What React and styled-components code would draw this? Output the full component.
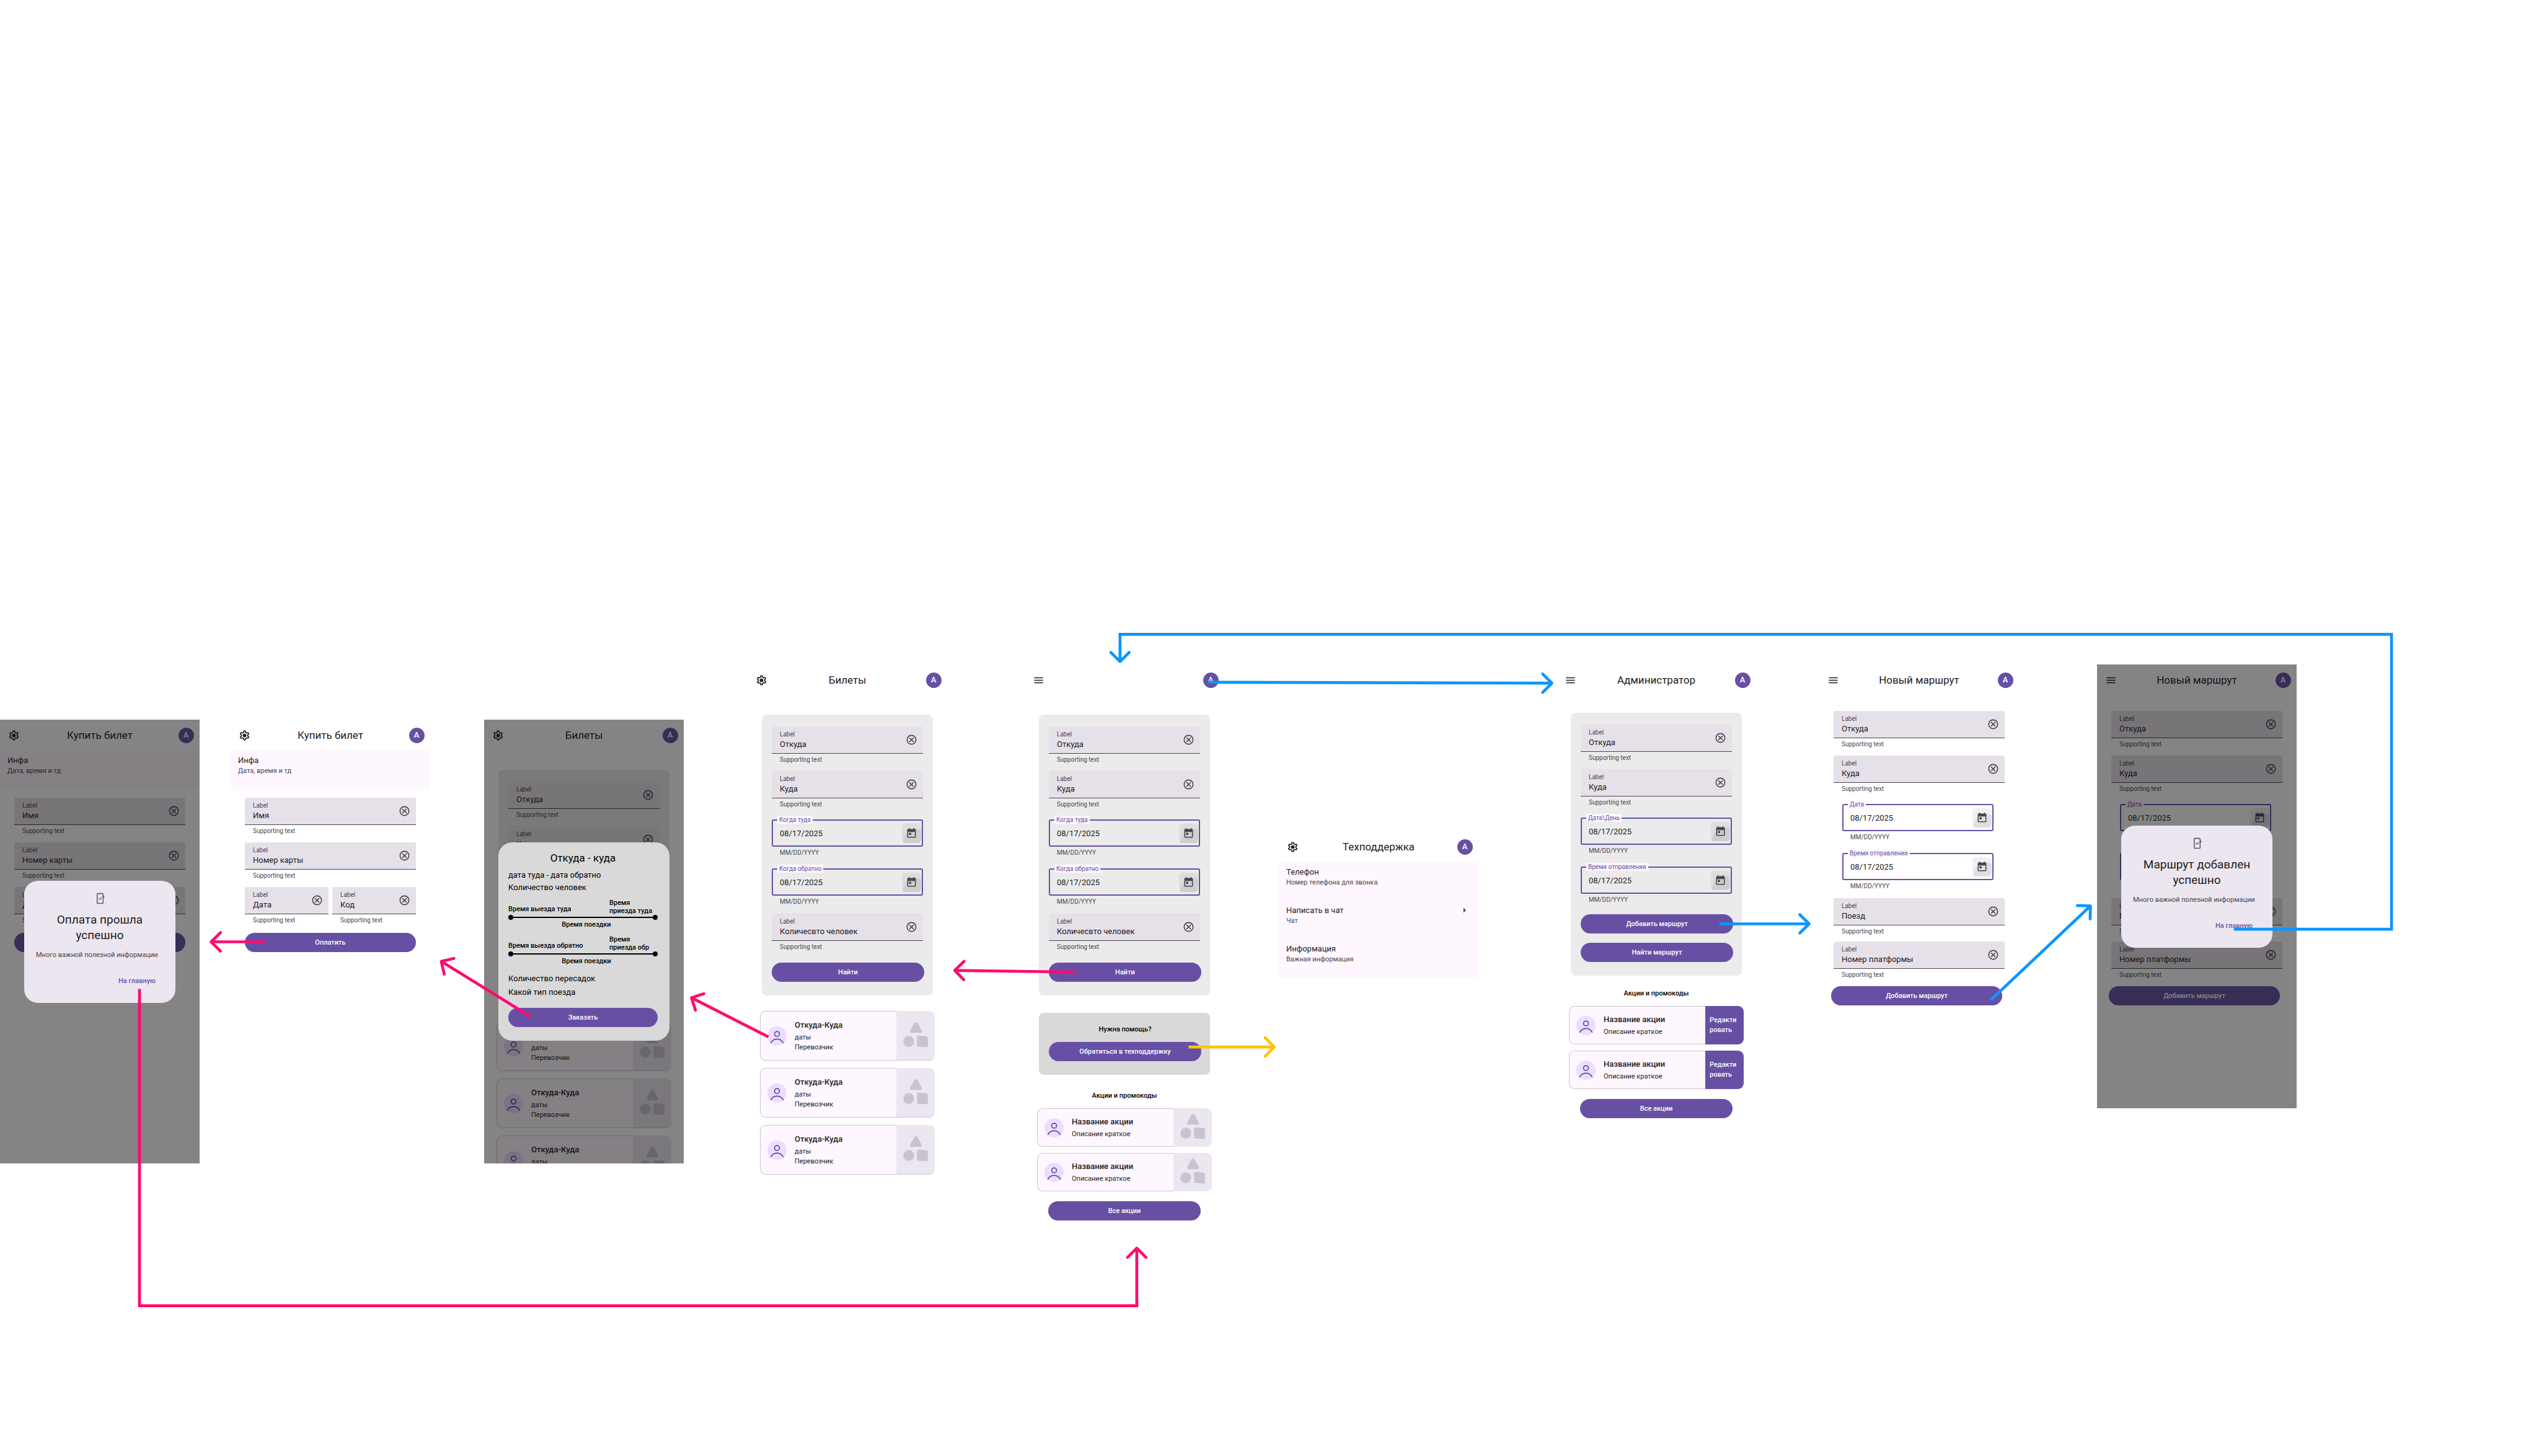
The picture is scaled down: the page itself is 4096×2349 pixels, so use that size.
import React, { useId } from "react";
import styled, { createGlobalStyle, css } from "styled-components";
import { MdOutlineCancel } from "react-icons/md";

const c = {
  primary: "#6750a4",
  onPrimary: "#ffffff",
  text: "#1d1b20",
  muted: "#49454f",
  surface: "#fef7ff",
  field: "#e6e0e9",
  high: "#ece6f0",
  outline: "#cac4d0",
  panel: "#ebebeb",
  panelDark: "#d9d9d9",
  pink: "#ff0b6d",
  blue: "#0c96ff",
  yellow: "#ffc30b",
};

const GlobalStyle = createGlobalStyle`
  *, *::before, *::after { box-sizing: border-box; }
  body {
    margin: 0;
    background: #ffffff;
    color: ${c.text};
    font-family: Roboto, "Noto Sans", sans-serif;
    font-size: 11px;
    line-height: 16px;
  }
  button, input { font: inherit; color: inherit; margin: 0; padding: 0; border: 0; background: none; }
  button { cursor: pointer; }
  h2, h3, p { margin: 0; font-weight: 400; }
`;

/* ---------- canvas ---------- */

const Board = styled.main`
  position: relative;
  width: 100%;
  min-height: 100vh;
  overflow: hidden;
`;

const Screen = styled.section`
  position: absolute;
  left: ${(p) => p.$x}px;
  top: ${(p) => p.$y}px;
  width: 322px;
  background: #ffffff;
  ${(p) => p.$framed && css`height: 716px; overflow: hidden;`}
`;

const Connectors = styled.svg`
  position: absolute;
  top: 0;
  left: 0;
  width: 100%;
  height: auto;
  pointer-events: none;
`;

/* ---------- building blocks ---------- */

const Bar = styled.header`
  display: flex;
  align-items: center;
  height: 50px;
  padding: 0 3px;
`;

const Slot = styled.button`
  display: flex;
  align-items: center;
  justify-content: center;
  flex: none;
  width: 38px;
  height: 38px;
`;

const BarTitle = styled.h2`
  flex: 1;
  text-align: center;
  font-size: 17px;
  line-height: 22px;
`;

const Initial = styled.span`
  display: flex;
  align-items: center;
  justify-content: center;
  width: 25px;
  height: 25px;
  border-radius: 50%;
  background: ${c.primary};
  color: ${c.onPrimary};
  font-size: 13px;
  font-weight: 500;
`;

const Section = styled.div`
  padding: ${(p) => p.$pad};
`;

const Stack = styled.div`
  display: flex;
  flex-direction: column;
  gap: ${(p) => p.$gap}px;
`;

const Pair = styled.div`
  display: grid;
  grid-template-columns: 1fr 1fr;
  gap: 6px;
`;

const Panel = styled.form`
  padding: 19px 14px 22px 16px;
  border-radius: 8px;
  background: ${c.panel};
`;

const HelpPanel = styled.div`
  display: flex;
  flex-direction: column;
  gap: 12px;
  padding: 19px 14px 22px 16px;
  border-radius: 8px;
  background: ${c.panelDark};
`;

const Caption = styled.h3`
  text-align: center;
  font-size: 11px;
  line-height: 16px;
  font-weight: 500;
  color: #000000;
`;

const Pill = styled.button`
  display: block;
  width: 100%;
  height: 31px;
  border-radius: 16px;
  background: ${c.primary};
  color: ${c.onPrimary};
  font-size: 11px;
  font-weight: 500;
`;

/* ---------- form fields ---------- */

const FieldBlock = styled.div`
  display: flex;
  flex-direction: column;
  min-width: 0;
`;

const Filled = styled.div`
  display: flex;
  align-items: center;
  height: 44px;
  padding-left: 13px;
  border-bottom: 1px solid ${c.muted};
  border-radius: 3px 3px 0 0;
  background: ${c.field};
`;

const FilledText = styled.div`
  display: flex;
  flex-direction: column;
  flex: 1;
  min-width: 0;
`;

const FieldLabel = styled.label`
  font-size: 10px;
  line-height: 13px;
  color: ${c.muted};
`;

const FieldInput = styled.input`
  width: 100%;
  min-width: 0;
  height: 19px;
  font-size: 13px;
  line-height: 19px;
  color: ${c.text};
  outline: none;
`;

const Support = styled.p`
  margin-top: 3px;
  padding-left: 13px;
  font-size: 10px;
  line-height: 13px;
  color: ${c.muted};
`;

const ClearSlot = styled(Slot)`
  color: ${c.muted};
`;

const DateBlock = styled(FieldBlock)`
  padding: 6px 0 1px;
`;

const Outlined = styled.div`
  position: relative;
  display: flex;
  align-items: center;
  height: 44px;
  padding: 0 1px 0 11px;
  border: 2px solid ${c.primary};
  border-radius: 3px;
`;

const NotchLabel = styled.label`
  position: absolute;
  top: -8px;
  left: 7px;
  padding: 0 3px;
  background: ${c.surface};
  color: ${c.primary};
  font-size: 10px;
  line-height: 13px;
`;

const DateButton = styled.button`
  position: relative;
  display: flex;
  flex: none;
  width: 31px;
  height: 31px;
`;

function TextField({ value }) {
  const id = useId();
  return (
    <FieldBlock>
      <Filled>
        <FilledText>
          <FieldLabel htmlFor={id}>Label</FieldLabel>
          <FieldInput id={id} type="text" defaultValue={value} />
        </FilledText>
        <ClearSlot type="button" aria-label="Очистить">
          <MdOutlineCancel size={19} />
        </ClearSlot>
      </Filled>
      <Support>Supporting text</Support>
    </FieldBlock>
  );
}

function DateField({ label }) {
  const id = useId();
  return (
    <DateBlock>
      <Outlined>
        <NotchLabel htmlFor={id}>{label}</NotchLabel>
        <FieldInput id={id} type="text" defaultValue="08/17/2025" />
        <DateButton type="button" aria-label="Календарь">
          <CalendarIcon />
        </DateButton>
      </Outlined>
      <Support>MM/DD/YYYY</Support>
    </DateBlock>
  );
}

/* ---------- icons ---------- */

const CalendarIcon = () => (
  <svg width="31" height="31" viewBox="0 0 40 40" aria-hidden="true">
    <rect width="40" height="40" rx="8" fill="rgba(73,69,79,0.08)" />
    <path
      d="M2 38C4 24 14 11 27 11C32 11 37 12.5 40 15V32a8 8 0 0 1-8 8H8C5 40 3 39.5 2 38Z"
      fill="rgba(73,69,79,0.1)"
    />
    <g transform="translate(8 8)" fill={c.muted}>
      <path d="M19 3h-1V1h-2v2H8V1H6v2H5c-1.1 0-2 .9-2 2v14c0 1.1.9 2 2 2h14c1.1 0 2-.9 2-2V5c0-1.1-.9-2-2-2zm0 16H5V9h14v10z" />
      <circle cx="9" cy="13" r="2.5" />
    </g>
  </svg>
);

const GearIcon = () => (
  <svg width="19" height="19" viewBox="0 0 24 24" fill={c.text} aria-hidden="true">
    <path d="M19.43 12.98c.04-.32.07-.64.07-.98 0-.34-.03-.66-.07-.98l2.11-1.65c.19-.15.24-.42.12-.64l-2-3.46a.5.5 0 0 0-.61-.22l-2.49 1c-.52-.4-1.08-.73-1.69-.98l-.38-2.65A.488.488 0 0 0 14 2h-4c-.25 0-.46.18-.49.42l-.38 2.65c-.61.25-1.17.59-1.69.98l-2.49-1a.566.566 0 0 0-.18-.03c-.17 0-.34.09-.43.25l-2 3.46c-.13.22-.07.49.12.64l2.11 1.65c-.04.32-.07.65-.07.98 0 .33.03.66.07.98l-2.11 1.65c-.19.15-.24.42-.12.64l2 3.46a.5.5 0 0 0 .61.22l2.49-1c.52.4 1.08.73 1.69.98l.38 2.65c.03.24.24.42.49.42h4c.25 0 .46-.18.49-.42l.38-2.65c.61-.25 1.17-.59 1.69-.98l2.49 1c.06.02.12.03.18.03.17 0 .34-.09.43-.25l2-3.46c.12-.22.07-.49-.12-.64l-2.11-1.65zm-1.98-1.71c.04.31.05.52.05.73 0 .21-.02.43-.05.73l-.14 1.13.89.7 1.08.84-.7 1.21-1.27-.51-1.04-.42-.9.68c-.43.32-.84.56-1.25.73l-1.06.43-.16 1.13-.2 1.35h-1.4l-.19-1.35-.16-1.13-1.06-.43c-.43-.18-.83-.41-1.23-.71l-.91-.7-1.06.43-1.27.51-.7-1.21 1.08-.84.89-.7-.14-1.13c-.03-.31-.05-.54-.05-.74s.02-.43.05-.73l.14-1.13-.89-.7-1.08-.84.7-1.21 1.27.51 1.04.42.9-.68c.43-.32.84-.56 1.25-.73l1.06-.43.16-1.13.2-1.35h1.39l.19 1.35.16 1.13 1.06.43c.43.18.83.41 1.23.71l.91.7 1.06-.43 1.27-.51.7 1.21-1.07.85-.89.7.14 1.13z" />
    <circle cx="12" cy="12" r="3.6" />
  </svg>
);

const MenuIcon = () => (
  <svg width="19" height="19" viewBox="0 0 24 24" fill={c.text} aria-hidden="true">
    <path d="M3 18h18v-2H3v2zm0-5h18v-2H3v2zm0-7v2h18V6H3z" />
  </svg>
);

const PhoneCheckIcon = () => (
  <svg width="19" height="19" viewBox="0 0 24 24" fill="none" stroke="#625b71" strokeWidth="2" aria-hidden="true">
    <rect x="6" y="2" width="12" height="20" rx="1" />
    <path d="M19.5 6.5v4" />
    <path d="M9 11.8l2.2 2.2L15.4 9.8" strokeWidth="1.6" />
  </svg>
);

const PersonIcon = () => (
  <svg width="31" height="31" viewBox="0 0 40 40" fill="none" stroke="#4f378a" strokeWidth="1.9" aria-hidden="true">
    <circle cx="20" cy="20" r="20" fill="#eaddff" stroke="none" />
    <circle cx="20" cy="15.7" r="5.1" />
    <path d="M6.8 34.8C9.5 29.3 14.5 26 20 26S30.5 29.3 33.2 34.8" />
  </svg>
);

const burst = Array.from({ length: 24 }, (_, i) => {
  const r = i % 2 ? 9.6 : 11.7;
  const a = (i * Math.PI) / 12;
  return `${(25.7 + r * Math.sin(a)).toFixed(2)},${(52 - r * Math.cos(a)).toFixed(2)}`;
}).join(" ");

const ShapesIcon = () => (
  <svg width="62" height="62" viewBox="0 0 80 80" fill="#c9c3cf" aria-hidden="true">
    <path d="M36.8 14.4C38.5 11 43 11 44.7 14.4L52.3 28.4C54.2 32 51.4 35.2 47.6 34.4C43 33.2 38.4 33.2 33.8 34.4C30 35.2 27.3 32 29.2 28.4Z" />
    <polygon points={burst} stroke="#c9c3cf" strokeWidth="1.2" strokeLinejoin="round" />
    <path d="M46.7 39.8L62 41Q65.7 41.4 65.7 45V60.5Q65.7 64.4 62 64L46.5 63Q43 62.7 43 59V43.5Q43 39.5 46.7 39.8Z" />
  </svg>
);

const CaretIcon = () => (
  <svg width="19" height="19" viewBox="0 0 24 24" fill={c.muted} aria-hidden="true">
    <path d="M10 17l5-5-5-5v10z" />
  </svg>
);

/* ---------- top bar ---------- */

function TopBar({ icon = "gear", title }) {
  return (
    <Bar>
      <Slot type="button" aria-label={icon === "gear" ? "Настройки" : "Меню"}>
        {icon === "gear" ? <GearIcon /> : <MenuIcon />}
      </Slot>
      <BarTitle>{title}</BarTitle>
      <Slot type="button" aria-label="Профиль">
        <Initial>A</Initial>
      </Slot>
    </Bar>
  );
}

/* ---------- cards ---------- */

const Card = styled.article`
  display: flex;
  height: ${(p) => (p.$tall ? 80 : 62)}px;
`;

const CardBody = styled.div`
  display: flex;
  align-items: center;
  gap: 13px;
  flex: 1;
  padding-left: 11px;
  border: 1px solid ${c.outline};
  border-right: 0;
  border-radius: 9px 0 0 9px;
  background: ${c.surface};
`;

const CardTitle = styled.h3`
  margin-bottom: 3px;
  font-size: 13px;
  line-height: 19px;
  font-weight: 500;
`;

const CardMedia = styled.div`
  display: flex;
  align-items: center;
  justify-content: center;
  flex: none;
  width: 62px;
  border-radius: 0 9px 9px 0;
  background: ${c.high};
  ${(p) => p.$tall && css`border-bottom: 1px solid ${c.outline};`}
`;

const EditButton = styled.button`
  flex: none;
  width: 62px;
  padding-left: 7px;
  border-radius: 0 9px 9px 0;
  background: ${c.primary};
  color: ${c.onPrimary};
  text-align: left;
  font-weight: 500;
`;

function InfoCard({ title, lines, editable }) {
  const tall = lines.length > 1;
  return (
    <Card $tall={tall}>
      <CardBody>
        <PersonIcon />
        <div>
          <CardTitle>{title}</CardTitle>
          {lines.map((line) => (
            <p key={line}>{line}</p>
          ))}
        </div>
      </CardBody>
      {editable ? (
        <EditButton type="button">
          Редакти
          <br />
          ровать
        </EditButton>
      ) : (
        <CardMedia $tall={tall}>
          <ShapesIcon />
        </CardMedia>
      )}
    </Card>
  );
}

/* ---------- list rows ---------- */

const Row = styled.div`
  display: flex;
  justify-content: space-between;
  height: 62px;
  padding: 6px 13px 6px 12px;
  background: ${c.surface};
`;

const RowTitle = styled.h3`
  font-size: 13px;
  line-height: 19px;
`;

const RowText = styled.p`
  color: ${c.muted};
`;

const ListRow = ({ title, text, caret }) => (
  <Row>
    <div>
      <RowTitle>{title}</RowTitle>
      <RowText>{text}</RowText>
    </div>
    {caret && <CaretIcon />}
  </Row>
);

/* ---------- dialogs ---------- */

const Scrim = styled.div`
  position: absolute;
  inset: 0;
  display: flex;
  align-items: center;
  justify-content: center;
  background: rgba(10, 10, 10, 0.5);
`;

const Dialog = styled.div`
  display: flex;
  flex-direction: column;
  width: 244px;
  padding: 19px;
  border-radius: 22px;
  background: ${c.high};
`;

const DialogIcon = styled.div`
  display: flex;
  justify-content: center;
  height: 19px;
  margin-bottom: 12px;
`;

const DialogTitle = styled.h2`
  margin-bottom: 12px;
  text-align: center;
  font-size: 19px;
  line-height: 25px;
`;

const DialogText = styled.p`
  margin-bottom: 19px;
  color: ${c.muted};
  white-space: nowrap;
`;

const TextButton = styled.button`
  align-self: flex-end;
  height: 31px;
  padding: 0 13px;
  color: ${c.primary};
  font-weight: 500;
`;

const SuccessDialog = ({ title }) => (
  <Scrim>
    <Dialog role="dialog" aria-label={title}>
      <DialogIcon>
        <PhoneCheckIcon />
      </DialogIcon>
      <DialogTitle>{title}</DialogTitle>
      <DialogText>Много важной полезной информации</DialogText>
      <TextButton type="button">На главную</TextButton>
    </Dialog>
  </Scrim>
);

const TripDialog = styled.div`
  display: flex;
  flex-direction: column;
  width: 276px;
  padding: 14px 19px 22px 16px;
  border-radius: 22px;
  background: ${c.panelDark};
  color: #000000;
`;

const TripTitle = styled.h2`
  margin-bottom: 7px;
  text-align: center;
  font-size: 17px;
  line-height: 22px;
`;

const TripFact = styled.p`
  font-size: 13px;
  line-height: ${(p) => (p.$loose ? 22 : 20)}px;
`;

const Trips = styled.div`
  display: flex;
  flex-direction: column;
  gap: 9px;
  margin: 8px 0 9px;
`;

const TripTimes = styled.div`
  display: grid;
  grid-template-columns: 1fr 78px;
  align-items: end;
  font-weight: 500;
  line-height: 13px;
`;

const Departure = styled.p`
  padding-bottom: 3px;
  font-weight: 500;
`;

const Arrival = styled.p`
  font-weight: 500;
  white-space: nowrap;
`;

const Track = styled.div`
  display: flex;
  align-items: center;
`;

const Dot = styled.span`
  width: 8px;
  height: 8px;
  border-radius: 50%;
  background: #000000;
`;

const Line = styled.span`
  flex: 1;
  height: 2px;
  background: #000000;
`;

const Duration = styled.p`
  padding-left: 11px;
  text-align: center;
  font-weight: 500;
`;

const Spaced = styled.div`
  margin-top: ${(p) => p.$top}px;
`;

const Trip = ({ from, to }) => (
  <div>
    <TripTimes>
      <Departure>{from}</Departure>
      <Arrival>
        Время
        <br />
        {to}
      </Arrival>
    </TripTimes>
    <Track>
      <Dot />
      <Line />
      <Dot />
    </Track>
    <Duration>Время поездки</Duration>
  </div>
);

/* ---------- screen contents ---------- */

const SearchForm = ({ people = true }) => (
  <Panel>
    <Section $pad="0 2px 0 0">
      <Stack $gap={12}>
        <TextField value="Откуда" />
        <TextField value="Куда" />
        <DateField label="Когда туда" />
        <DateField label="Когда обратно" />
        {people && <TextField value="Количесвто человек" />}
      </Stack>
    </Section>
    <Spaced $top={19}>
      <Pill type="button">Найти</Pill>
    </Spaced>
  </Panel>
);

const Tickets = ({ people }) => (
  <>
    <TopBar title="Билеты" />
    <Section $pad="31px 23px 25px">
      <SearchForm people={people} />
    </Section>
    <Section $pad="0 20px">
      <Stack $gap={12}>
        {[1, 2, 3].map((n) => (
          <InfoCard key={n} title="Откуда-Куда" lines={["даты", "Перевозчик"]} />
        ))}
      </Stack>
    </Section>
  </>
);

const Purchase = () => (
  <>
    <TopBar title="Купить билет" />
    <ListRow title="Инфа" text="Дата, время и тд" />
    <Section $pad="14px 23px 0">
      <Stack $gap={12}>
        <TextField value="Имя" />
        <TextField value="Номер карты" />
        <Pair>
          <TextField value="Дата" />
          <TextField value="Код" />
        </Pair>
      </Stack>
      <Spaced $top={14}>
        <Pill type="button">Оплатить</Pill>
      </Spaced>
    </Section>
  </>
);

const Promos = ({ editable }) => (
  <>
    <Caption>Акции и промокоды</Caption>
    <Section $pad="12px 20px 16px">
      <Stack $gap={10}>
        <InfoCard title="Название акции" lines={["Описание краткое"]} editable={editable} />
        <InfoCard title="Название акции" lines={["Описание краткое"]} editable={editable} />
      </Stack>
    </Section>
    <Section $pad="0 38px">
      <Pill type="button">Все акции</Pill>
    </Section>
  </>
);

const NewRoute = () => (
  <>
    <TopBar icon="menu" title="Новый маршрут" />
    <Section $pad="25px 23px 12px">
      <Stack $gap={12}>
        <TextField value="Откуда" />
        <TextField value="Куда" />
        <Section $pad="0 18px 0 14px">
          <Stack $gap={12}>
            <DateField label="Дата" />
            <DateField label="Время отправления" />
          </Stack>
        </Section>
        <Stack $gap={10}>
          <TextField value="Поезд" />
          <TextField value="Номер платформы" />
        </Stack>
      </Stack>
    </Section>
    <Section $pad="0 27px 0 19px">
      <Pill type="button">Добавить маршрут</Pill>
    </Section>
  </>
);

/* ---------- flow arrows ---------- */

function Arrow({ color, points }) {
  const [tx, ty] = points[points.length - 1];
  const [px, py] = points[points.length - 2];
  const angle = Math.atan2(ty - py, tx - px);
  const wing = (turn) => {
    const a = angle + Math.PI + turn;
    return `${(tx + 27 * Math.cos(a)).toFixed(1)} ${(ty + 27 * Math.sin(a)).toFixed(1)}`;
  };
  return (
    <g fill="none" stroke={color} strokeWidth="6">
      <polyline points={points.map((p) => p.join(",")).join(" ")} />
      <path
        d={`M${wing(Math.PI / 4)}L${tx} ${ty}L${wing(-Math.PI / 4)}`}
        strokeLinecap="round"
        strokeLinejoin="round"
      />
    </g>
  );
}

const arrows = [
  { color: c.pink, points: [[546, 1944.6], [436, 1944.6]] },
  { color: c.pink, points: [[1095, 2099], [911, 1985]] },
  { color: c.pink, points: [[1586.5, 2141], [1427.5, 2060]] },
  { color: c.pink, points: [[2220.5, 2007], [1971, 2003.7]] },
  { color: c.pink, points: [[288, 2042], [288, 2696], [2347, 2696], [2347, 2577]] },
  { color: c.yellow, points: [[2454, 2161.7], [2631, 2161.7]] },
  { color: c.blue, points: [[2494, 1408.5], [3204, 1410.6]] },
  { color: c.blue, points: [[3550, 1907.5], [3735, 1907.5]] },
  { color: c.blue, points: [[4110, 2065], [4316, 1870.5]] },
  { color: c.blue, points: [[4612, 1918.5], [4937.5, 1918.5], [4937.5, 1309.6], [2312.4, 1309.6], [2312.4, 1366]] },
];

export default function App() {
  return (
    <>
      <GlobalStyle />
      <Board>
        <Screen $x={0} $y={1161} $framed>
          <Purchase />
          <SuccessDialog title="Оплата прошла успешно" />
        </Screen>

        <Screen $x={372} $y={1161}>
          <Purchase />
        </Screen>

        <Screen $x={781} $y={1161} $framed>
          <Tickets people={false} />
          <Scrim>
            <TripDialog role="dialog" aria-label="Откуда - куда">
              <TripTitle>Откуда - куда</TripTitle>
              <TripFact>дата туда - дата обратно</TripFact>
              <TripFact>Количество человек</TripFact>
              <Trips>
                <Trip from="Время выезда туда" to="приезда туда" />
                <Trip from="Время выезда обратно" to="приезда обр" />
              </Trips>
              <TripFact $loose>Количество пересадок</TripFact>
              <TripFact $loose>Какой тип поезда</TripFact>
              <Spaced $top={14}>
                <Pill type="button">Заказать</Pill>
              </Spaced>
            </TripDialog>
          </Scrim>
        </Screen>

        <Screen $x={1206} $y={1072}>
          <Tickets />
        </Screen>

        <Screen $x={1653} $y={1072}>
          <TopBar icon="menu" />
          <Section $pad="31px 23px 28px">
            <SearchForm />
          </Section>
          <Section $pad="0 23px 26px">
            <HelpPanel>
              <Caption>Нужна помощь?</Caption>
              <Pill type="button">Обратиться в техподдержку</Pill>
            </HelpPanel>
          </Section>
          <Promos />
        </Screen>

        <Screen $x={2063} $y={1341}>
          <TopBar title="Техподдержка" />
          <ListRow title="Телефон" text="Номер телефона для звонка" />
          <ListRow title="Написать в чат" text="Чат" caret />
          <ListRow title="Информация" text="Важная информация" />
        </Screen>

        <Screen $x={2511} $y={1072}>
          <TopBar icon="menu" title="Администратор" />
          <Section $pad="28px 23px 21px">
            <Panel>
              <Section $pad="0 2px 0 0">
                <Stack $gap={12}>
                  <TextField value="Откуда" />
                  <TextField value="Куда" />
                  <DateField label="Дата\День" />
                  <DateField label="Время отправления" />
                </Stack>
              </Section>
              <Spaced $top={16}>
                <Stack $gap={15}>
                  <Pill type="button">Добавить маршрут</Pill>
                  <Pill type="button">Найти маршрут</Pill>
                </Stack>
              </Spaced>
            </Panel>
          </Section>
          <Promos editable />
        </Screen>

        <Screen $x={2935} $y={1072}>
          <NewRoute />
        </Screen>

        <Screen $x={3383} $y={1072} $framed>
          <NewRoute />
          <SuccessDialog title="Маршрут добавлен успешно" />
        </Screen>

        <Connectors viewBox="0 0 5242 3006" aria-hidden="true">
          {arrows.map((arrow, i) => (
            <Arrow key={i} {...arrow} />
          ))}
        </Connectors>
      </Board>
    </>
  );
}
